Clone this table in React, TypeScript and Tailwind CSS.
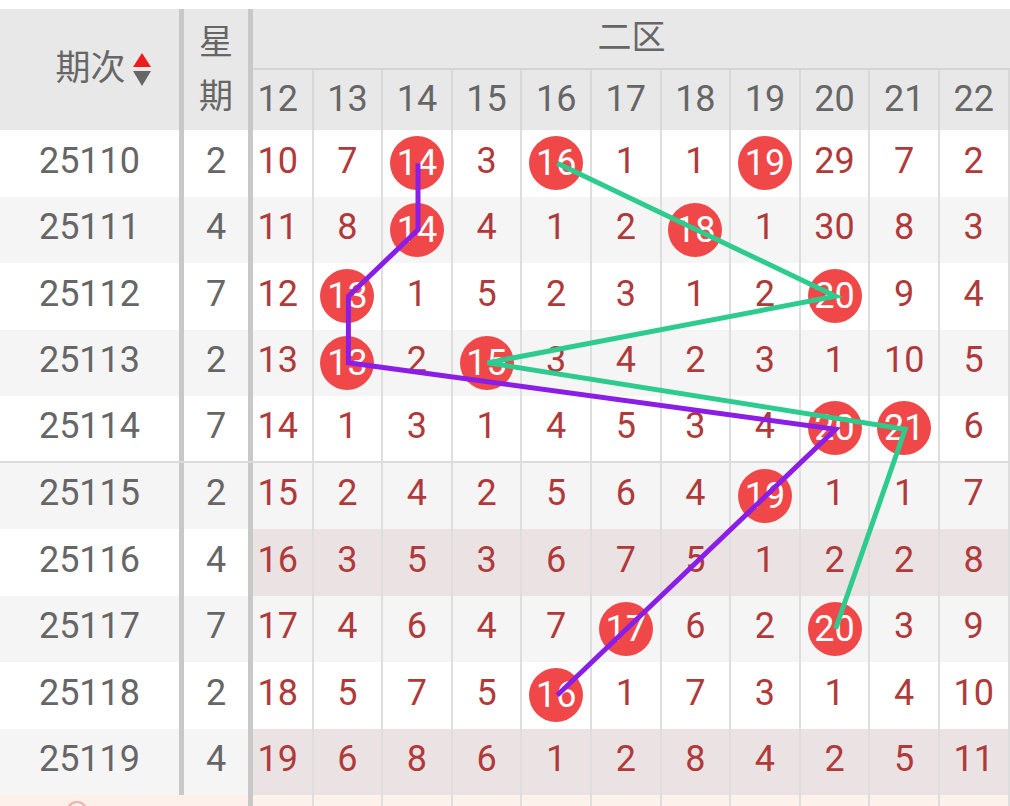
import React from "react";

type Row = { issue: string; week: number; nums: number[]; hits: number[]; bg: string; leftBg: string };

const COLS = [12, 13, 14, 15, 16, 17, 18, 19, 20, 21, 22];

const WHITE = "bg-white";
const GRAY = "bg-[#f5f5f5]";
const PINK = "bg-[#ebe3e3]";

const rows: Row[] = [
  { issue: "25110", week: 2, nums: [10, 7, 14, 3, 16, 1, 1, 19, 29, 7, 2], hits: [14, 16, 19], bg: WHITE, leftBg: WHITE },
  { issue: "25111", week: 4, nums: [11, 8, 14, 4, 1, 2, 18, 1, 30, 8, 3], hits: [14, 18], bg: GRAY, leftBg: GRAY },
  { issue: "25112", week: 7, nums: [12, 13, 1, 5, 2, 3, 1, 2, 20, 9, 4], hits: [13, 20], bg: WHITE, leftBg: WHITE },
  { issue: "25113", week: 2, nums: [13, 13, 2, 15, 3, 4, 2, 3, 1, 10, 5], hits: [13, 15], bg: GRAY, leftBg: GRAY },
  { issue: "25114", week: 7, nums: [14, 1, 3, 1, 4, 5, 3, 4, 20, 21, 6], hits: [20, 21], bg: WHITE, leftBg: WHITE },
  { issue: "25115", week: 2, nums: [15, 2, 4, 2, 5, 6, 4, 19, 1, 1, 7], hits: [19], bg: GRAY, leftBg: GRAY },
  { issue: "25116", week: 4, nums: [16, 3, 5, 3, 6, 7, 5, 1, 2, 2, 8], hits: [], bg: PINK, leftBg: WHITE },
  { issue: "25117", week: 7, nums: [17, 4, 6, 4, 7, 17, 6, 2, 20, 3, 9], hits: [17, 20], bg: GRAY, leftBg: GRAY },
  { issue: "25118", week: 2, nums: [18, 5, 7, 5, 16, 1, 7, 3, 1, 4, 10], hits: [16], bg: WHITE, leftBg: WHITE },
  { issue: "25119", week: 4, nums: [19, 6, 8, 6, 1, 2, 8, 4, 2, 5, 11], hits: [], bg: PINK, leftBg: GRAY },
];

// geometry used by the trend lines
const colX = (n: number) => 278.8 + 69.6 * COLS.indexOf(n);
const rowY = (r: number) => 163.25 + 66.5 * r;

// [row, column]
const purple: [number, number][] = [[0, 14], [1, 14], [2, 13], [3, 13], [4, 20], [8, 16]];
const green: [number, number][] = [[0, 16], [2, 20], [3, 15], [4, 21], [7, 20]];

const pts = (list: [number, number][]) => list.map(([r, c]) => `${colX(c)},${rowY(r)}`).join(" ");

const font = { fontFamily: "Roboto, 'Noto Sans CJK SC', sans-serif" };

function SortIcon() {
  return (
    <svg width="20" height="38" viewBox="0 0 20 38" className="ml-[6px]">
      <polygon points="10,2 19,16 1,16" fill="#f01a1a" />
      <polygon points="1,20 19,20 10,35" fill="#666666" />
    </svg>
  );
}

function NumCell({ n, col, hit }: { n: number; col: number; hit: boolean }) {
  return (
    <div className="w-[69.6px] shrink-0 h-full border-r-2 border-[#dedede] flex items-center justify-center">
      {hit ? (
        <div className="w-[54px] h-[54px] rounded-full bg-[#f04848] flex items-center justify-center text-white text-[36px] leading-none">
          {col}
        </div>
      ) : (
        <span className="text-[#b03a3a] text-[36px] leading-none pb-[5px]">{n}</span>
      )}
    </div>
  );
}

export default function App() {
  return (
    <div className="relative w-[1010px] h-[806px] overflow-hidden bg-white" style={font}>
      <div className="h-[9px]" />

      {/* header */}
      <div className="flex h-[121px] bg-[#e8e8e8]">
        <div className="w-[179px] flex items-center justify-center pl-[28px] text-[#666] text-[35px]">
          <span>期次</span>
          <SortIcon />
        </div>
        <div className="w-[5px] bg-[#c8c8c8]" />
        <div className="w-[64px] flex flex-col items-center justify-center text-[#666] text-[34px] leading-[54px] pb-[2px]">
          <span>星</span>
          <span>期</span>
        </div>
        <div className="w-[5px] bg-[#c8c8c8]" />
        <div className="flex-1 flex flex-col overflow-hidden">
          <div className="h-[59px] flex items-center justify-center text-[#666] text-[34px] pb-[2px]">二区</div>
          <div className="h-[2px] bg-[#d4d4d4]" />
          <div className="h-[60px] flex ml-[-9px]">
            {COLS.map((c) => (
              <div
                key={c}
                className="w-[69.6px] shrink-0 h-full border-r-2 border-[#d8d8d8] flex items-center justify-center text-[#666] text-[36px] pb-[2px]"
              >
                {c}
              </div>
            ))}
          </div>
        </div>
      </div>

      {/* body */}
      {rows.map((row, i) => (
        <div key={row.issue} className={`flex h-[66.5px] ${i === 4 ? "border-b-2 border-[#dcdcdc]" : ""}`}>
          <div className={`w-[179px] flex items-center justify-center text-[#666] text-[36px] pb-[5px] ${row.leftBg}`}>
            {row.issue}
          </div>
          <div className="w-[5px] bg-[#c8c8c8]" />
          <div className={`w-[64px] flex items-center justify-center text-[#666] text-[36px] pb-[5px] ${row.leftBg}`}>
            {row.week}
          </div>
          <div className="w-[5px] bg-[#c8c8c8]" />
          <div className={`flex-1 overflow-hidden ${row.bg}`}>
            <div className="flex h-full ml-[-9px]">
              {COLS.map((c, k) => (
                <NumCell key={c} n={row.nums[k]} col={c} hit={row.hits.includes(c)} />
              ))}
            </div>
          </div>
        </div>
      ))}

      {/* footer strip */}
      <div className="flex h-[11px] bg-[#fdefe9]">
        <div className="w-[248px] relative">
          <div className="absolute left-[66px] top-[6px] w-[22px] h-[22px] rounded-full border-2 border-[#f3b0a8]" />
        </div>
        <div className="w-[5px] bg-[#c8c8c8]" />
        <div className="flex-1 overflow-hidden bg-[#fdf1ec]">
          <div className="flex h-full ml-[-9px]">
            {COLS.map((c) => (
              <div key={c} className="w-[69.6px] shrink-0 h-full border-r-2 border-[#dedede]" />
            ))}
          </div>
        </div>
      </div>

      {/* trend lines */}
      <svg className="absolute inset-0 pointer-events-none" width="1010" height="806" viewBox="0 0 1010 806">
        <polyline points={pts(purple)} fill="none" stroke="#8a1ee6" strokeWidth="5" strokeLinejoin="miter" />
        <polyline points={pts(green)} fill="none" stroke="#2dcb8e" strokeWidth="5" strokeLinejoin="miter" />
      </svg>
    </div>
  );
}
